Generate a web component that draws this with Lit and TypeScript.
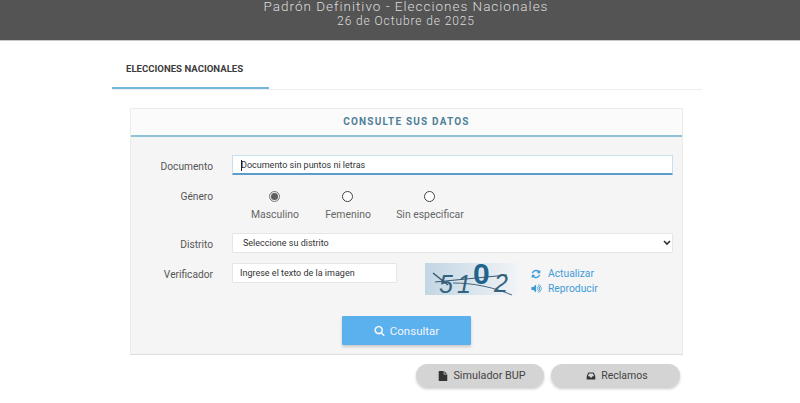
import { html, css, LitElement } from "lit";
import { customElement } from "lit/decorators.js";

const ICONS = {
  search:
    "M1216 832q0-185-131.5-316.5t-316.5-131.5-316.5 131.5-131.5 316.5 131.5 316.5 316.5 131.5 316.5-131.5 131.5-316.5zm512 832q0 52-38 90t-90 38q-54 0-90-38l-343-342q-179 124-399 124-143 0-273.5-55.5t-225-150-150-225-55.5-273.5 55.5-273.5 150-225 225-150 273.5-55.5 273.5 55.5 225 150 150 225 55.5 273.5q0 220-124 399l343 343q37 37 37 90z",
  refresh:
    "M1639 1056q0 5-1 7-64 268-268 434.5t-478 166.5q-146 0-282.5-55t-243.5-157l-129 129q-19 19-45 19t-45-19-19-45v-448q0-26 19-45t45-19h448q26 0 45 19t19 45-19 45l-137 137q71 66 161 102t187 36q134 0 250-65t186-179q11-17 53-117 8-23 30-23h192q13 0 22.5 9.5t9.5 22.5zm25-800v448q0 26-19 45t-45 19h-448q-26 0-45-19t-19-45 19-45l138-138q-148-137-349-137-134 0-250 65t-186 179q-11 17-53 117-8 23-30 23h-199q-13 0-22.5-9.5t-9.5-22.5v-7q65-268 270-434.5t480-166.5q146 0 284 55.5t245 156.5l130-129q19-19 45-19t45 19 19 45z",
  volume:
    "M832 352v1088q0 26-19 45t-45 19-45-19l-333-333h-262q-26 0-45-19t-19-45v-384q0-26 19-45t45-19h262l333-333q19-19 45-19t45 19 19 45zm384 544q0 76-42.5 141.5t-112.5 93.5q-10 5-25 5-26 0-45-18.5t-19-45.5q0-21 12-35.5t29-25 34-23 29-36 12-56.5-12-56.5-29-36-34-23-29-25-12-35.5q0-27 19-45.5t45-18.5q15 0 25 5 70 27 112.5 93t42.5 142zm256 0q0 153-85 282.5t-225 188.5q-13 5-25 5-27 0-46-19t-19-45q0-39 39-59 56-29 76-44 74-54 115.5-135.5t41.5-173.5-41.5-173.5-115.5-135.5q-20-15-76-44-39-20-39-59 0-26 19-45t45-19q13 0 26 5 140 59 225 188.5t85 282.5zm256 0q0 230-127 422.5t-338 283.5q-13 5-26 5-26 0-45-19t-19-45q0-36 39-59 7-4 22.5-10.5t22.5-10.5q46-25 82-51 123-91 192-227t69-289-69-289-192-227q-36-26-82-51-7-4-22.5-10.5t-22.5-10.5q-39-23-39-59 0-26 19-45t45-19q13 0 26 5 211 91 338 283.5t127 422.5z",
  file: "M1152 512v-472q22 14 36 28l408 408q14 14 28 36h-472zm-128 32q0 40 28 68t68 28h544v1056q0 40-28 68t-68 28h-1344q-40 0-68-28t-28-68v-1600q0-40 28-68t68-28h800v544z",
  inbox:
    "M1151 960h316q-1-3-2.5-8.5t-2.5-7.5l-212-496h-708l-212 496q-1 2-2.5 7.5t-2.5 8.5h316l95 192h320zm513 30v482q0 26-19 45t-45 19h-1408q-26 0-45-19t-19-45v-482q0-62 25-123l238-552q10-25 36.5-42t52.5-17h832q26 0 52.5 17t36.5 42l238 552q25 61 25 123z",
};

const icon = (d: string, size: number) => html`<svg
  width=${size}
  height=${size}
  viewBox="0 0 1792 1792"
  fill="currentColor"
>
  <path d=${d} />
</svg>`;

@customElement("app-root")
export class AppRoot extends LitElement {
  static styles = css`
    :host {
      display: block;
      width: 800px;
      height: 403px;
      overflow: hidden;
      background: #fff;
      font-family: Roboto, "Liberation Sans", sans-serif;
      color: #555;
    }
    .top {
      box-sizing: border-box;
      height: 41px;
      padding: 0 0 0 12px;
      background: #545454;
      border-bottom: 1px solid #c8c8c8;
      color: #dcdcdc;
      text-align: center;
      letter-spacing: 1px;
      font-weight: 300;
    }
    .top .title {
      font-size: 13.5px;
      line-height: 13px;
    }
    .top .date {
      font-size: 12px;
      line-height: 14px;
      letter-spacing: 0.9px;
      padding-top: 1px;
    }
    .tabs {
      margin: 0 98px 0 112px;
      height: 48px;
      border-bottom: 1px solid #eee;
      display: flex;
    }
    .tab {
      box-sizing: border-box;
      width: 157px;
      height: 48px;
      padding: 21px 0 0 14px;
      border-bottom: 2px solid #74b6dc;
      font-size: 9.6px;
      line-height: 14px;
      font-weight: 700;
      color: #3c3c3c;
    }
    .panel {
      margin: 18px 117px 0 130px;
      height: 247px;
      box-sizing: border-box;
      background: #f5f5f5;
      border: 1px solid #ebebeb;
      border-bottom: 1px solid #ddd;
    }
    .head {
      height: 28px;
      box-sizing: border-box;
      background: #fbfbfb;
      border-bottom: 2px solid #8fc3d8;
      text-align: center;
      font-size: 10px;
      line-height: 26px;
      font-weight: 700;
      letter-spacing: 1.2px;
      color: #4f7f98;
    }
    form {
      padding: 18px 9px 0 0;
      display: grid;
      grid-template-columns: 82px 441px;
      column-gap: 19px;
      font-size: 10.4px;
    }
    label.side {
      box-sizing: border-box;
      height: 20px;
      padding-top: 4px;
      text-align: right;
      color: #555;
      font-size: 10.2px;
      line-height: 16px;
    }
    label.side.gender-label {
      margin-top: 10px;
    }
    input.text,
    select {
      box-sizing: border-box;
      height: 20px;
      background: #fff;
      border: 1px solid #e6e6e6;
      font: 9px Roboto, sans-serif;
      color: #333;
      padding: 0 0 0 7px;
      border-radius: 1px;
      outline: none;
    }
    input.text::placeholder {
      color: #333;
      opacity: 1;
    }
    .doc {
      position: relative;
      height: 20px;
    }
    .doc input {
      width: 100%;
      padding-left: 8px;
      border: 1px solid #c5dff0;
      border-bottom: 2px solid #5c9ccb;
    }
    .caret {
      position: absolute;
      left: 9px;
      top: 5px;
      width: 1px;
      height: 11px;
      background: #222;
    }
    .genders {
      margin-top: 15px;
      display: flex;
      height: 43px;
      box-sizing: border-box;
    }
    .gender {
      display: flex;
      flex-direction: column;
      align-items: center;
      color: #666;
      font-size: 10.4px;
      line-height: 14px;
      white-space: nowrap;
    }
    .gender .label {
      margin-top: 6px;
    }
    .gender:nth-child(1) {
      width: 48px;
      margin-left: 19px;
    }
    .gender:nth-child(2) {
      width: 46px;
      margin-left: 26px;
    }
    .gender:nth-child(3) {
      width: 68px;
      margin-left: 25px;
    }
    .radio {
      box-sizing: border-box;
      width: 11px;
      height: 11px;
      margin: 1px 2px 0 0;
      border-radius: 50%;
      border: 1px solid #444;
      background: #fff;
      display: flex;
      align-items: center;
      justify-content: center;
    }
    .radio.on {
      border-color: #777;
      background: #eee;
    }
    .radio.on::after {
      content: "";
      width: 7px;
      height: 7px;
      border-radius: 50%;
      background: #5f5f5f;
    }
    .select-box {
      position: relative;
      height: 20px;
      margin-bottom: 10px;
    }
    select {
      display: block;
      width: 100%;
      padding-left: 10px;
      appearance: none;
    }
    .chevron {
      position: absolute;
      right: 2px;
      top: 7px;
      color: #333;
    }
    .verify {
      display: flex;
      height: 40px;
    }
    .verify input {
      width: 165px;
    }
    .captcha {
      display: block;
      margin-left: 28px;
      overflow: visible;
    }
    .links {
      margin: 3px 0 0 14px;
      display: flex;
      flex-direction: column;
      color: #3f9bd8;
      font-size: 10.3px;
      line-height: 15px;
    }
    .links span {
      display: flex;
      align-items: center;
    }
    .links svg {
      margin-right: 7px;
    }
    .links .sound svg {
      margin-right: 6px;
    }
    .submit-row {
      display: flex;
      justify-content: center;
      padding: 13px 0 0 0;
    }
    .submit {
      width: 129px;
      height: 29px;
      border: none;
      background: #5bb0ee;
      border-radius: 1px;
      color: #f2f7fb;
      font: 11.5px Roboto, sans-serif;
      box-shadow: 0 2px 3px rgba(0, 0, 0, 0.18);
      display: flex;
      align-items: center;
      justify-content: center;
      gap: 5px;
      padding: 0;
    }
    .foot {
      display: flex;
      gap: 7px;
      margin: 9px 0 0 416px;
    }
    .pill {
      width: 128px;
      height: 23px;
      border-radius: 12px;
      border: none;
      padding: 0 0 0 4px;
      background: #d4d4d4;
      color: #444;
      font: 10.8px Roboto, sans-serif;
      box-shadow: 0 2px 3px rgba(0, 0, 0, 0.2);
      display: flex;
      align-items: center;
      justify-content: center;
      gap: 5px;
    }
    .pill + .pill {
      width: 129px;
      padding-left: 3px;
      font-size: 10.5px;
    }
    .pill svg {
      color: #333;
    }
  `;

  renderCaptcha() {
    return html`<svg class="captcha" width="92" height="32" viewBox="0 0 92 32">
      <defs>
        <linearGradient id="cg" x1="0" y1="0" x2="1" y2="0">
          <stop offset="0" stop-color="#c2d6e3" />
          <stop offset="1" stop-color="#f0f3f6" />
        </linearGradient>
      </defs>
      <rect width="92" height="32" fill="url(#cg)" />
      <g
        font-family="Liberation Sans, sans-serif"
        font-style="italic"
        fill="#33647f"
        font-size="25"
      >
        <text x="14" y="30">5</text>
        <text x="32" y="30">1</text>
        <text x="69" y="29">2</text>
      </g>
      <text
        x="48"
        y="21"
        font-size="30"
        font-weight="700"
        font-family="Liberation Sans, sans-serif"
        fill="#1f648e"
      >0</text>
      <g stroke="#33586f" fill="none">
        <path d="M8 10l15 12" stroke-width="1.5" />
        <path d="M10 19L82 12" stroke-width="1" />
        <path d="M28 20c20 0 40 4 59 12" stroke-width="0.9" />
      </g>
    </svg>`;
  }

  render() {
    return html`
      <div class="top">
        <div class="title">Padrón Definitivo - Elecciones Nacionales</div>
        <div class="date">26 de Octubre de 2025</div>
      </div>
      <div class="tabs"><div class="tab">ELECCIONES NACIONALES</div></div>
      <div class="panel">
        <div class="head">CONSULTE SUS DATOS</div>
        <form>
          <label class="side">Documento</label>
          <div class="doc">
            <input class="text" placeholder="Documento sin puntos ni letras" />
            <span class="caret"></span>
          </div>

          <label class="side gender-label">Género</label>
          <div class="genders">
            <div class="gender"><span class="radio on"></span><span class="label">Masculino</span></div>
            <div class="gender"><span class="radio"></span><span class="label">Femenino</span></div>
            <div class="gender"><span class="radio"></span><span class="label">Sin especificar</span></div>
          </div>

          <label class="side">Distrito</label>
          <div class="select-box">
            <select><option>Seleccione su distrito</option></select>
            <svg class="chevron" width="8" height="6" viewBox="0 0 8 6" fill="none" stroke="currentColor" stroke-width="1.7">
              <path d="M1 1l3 3 3-3" />
            </svg>
          </div>

          <label class="side">Verificador</label>
          <div class="verify">
            <input class="text" placeholder="Ingrese el texto de la imagen" />
            ${this.renderCaptcha()}
            <div class="links">
              <span>${icon(ICONS.refresh, 10)} Actualizar</span>
              <span class="sound">${icon(ICONS.volume, 11)} Reproducir</span>
            </div>
          </div>
        </form>
        <div class="submit-row">
          <button class="submit">${icon(ICONS.search, 11)} Consultar</button>
        </div>
      </div>
      <div class="foot">
        <button class="pill">${icon(ICONS.file, 10)} Simulador BUP</button>
        <button class="pill">${icon(ICONS.inbox, 10)} Reclamos</button>
      </div>
    `;
  }
}
